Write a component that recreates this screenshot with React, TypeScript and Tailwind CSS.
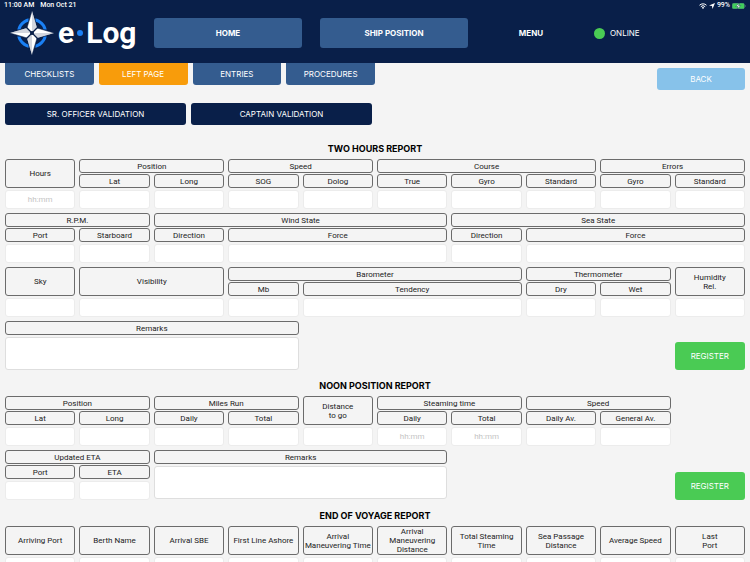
import React, { useId } from 'react';

type Field = { label: string; span?: number; placeholder?: string };
type Block = { label: string; span: number; fields?: Field[]; placeholder?: string };

const SPANS: Record<number, string> = {
  1: 'col-span-1',
  2: 'col-span-2',
  3: 'col-span-3',
  4: 'col-span-4',
};

const twoHours: Block[] = [
  { label: 'Hours', span: 1, placeholder: 'hh:mm' },
  { label: 'Position', span: 2, fields: [{ label: 'Lat' }, { label: 'Long' }] },
  { label: 'Speed', span: 2, fields: [{ label: 'SOG' }, { label: 'Dolog' }] },
  { label: 'Course', span: 3, fields: [{ label: 'True' }, { label: 'Gyro' }, { label: 'Standard' }] },
  { label: 'Errors', span: 2, fields: [{ label: 'Gyro' }, { label: 'Standard' }] },
  { label: 'R.P.M.', span: 2, fields: [{ label: 'Port' }, { label: 'Starboard' }] },
  { label: 'Wind State', span: 4, fields: [{ label: 'Direction' }, { label: 'Force', span: 3 }] },
  { label: 'Sea State', span: 4, fields: [{ label: 'Direction' }, { label: 'Force', span: 3 }] },
  { label: 'Sky', span: 1 },
  { label: 'Visibility', span: 2 },
  { label: 'Barometer', span: 4, fields: [{ label: 'Mb' }, { label: 'Tendency', span: 3 }] },
  { label: 'Thermometer', span: 2, fields: [{ label: 'Dry' }, { label: 'Wet' }] },
  { label: 'Humidity\nRel.', span: 1 },
];

const noonPosition: Block[] = [
  { label: 'Position', span: 2, fields: [{ label: 'Lat' }, { label: 'Long' }] },
  { label: 'Miles Run', span: 2, fields: [{ label: 'Daily' }, { label: 'Total' }] },
  { label: 'Distance\nto go', span: 1 },
  {
    label: 'Steaming time',
    span: 2,
    fields: [
      { label: 'Daily', placeholder: 'hh:mm' },
      { label: 'Total', placeholder: 'hh:mm' },
    ],
  },
  { label: 'Speed', span: 2, fields: [{ label: 'Daily Av.' }, { label: 'General Av.' }] },
];

const updatedEta: Block = { label: 'Updated ETA', span: 2, fields: [{ label: 'Port' }, { label: 'ETA' }] };

const endOfVoyage: Block[] = [
  'Arriving Port',
  'Berth Name',
  'Arrival SBE',
  'First Line Ashore',
  'Arrival\nManeuvering Time',
  'Arrival\nManeuvering\nDistance',
  'Total Steaming\nTime',
  'Sea Passage\nDistance',
  'Average Speed',
  'Last\nPort',
].map(label => ({ label, span: 1 }));

const cell = 'flex items-center justify-center rounded-[3px] border border-[#6b6b6b] text-center whitespace-pre';
const input =
  'w-full rounded-[3px] border border-[#ececec] bg-white text-center placeholder:text-[#c4c4c4] outline-none focus:border-[#345c8f]';

const FieldInput: React.FC<{ field: Field; tall?: boolean }> = ({ field, tall }) => {
  const id = useId();
  return (
    <div className={`${SPANS[field.span ?? 1]} min-w-0`}>
      <label htmlFor={id} className={`${cell} ${tall ? 'h-[29px]' : 'h-[14px]'}`}>{field.label}</label>
      <input id={id} placeholder={field.placeholder} className={`${input} mt-[2px] block h-[19px]`} />
    </div>
  );
};

const FieldBlock: React.FC<{ block: Block }> = ({ block }) => {
  if (!block.fields) {
    return <FieldInput field={block} tall />;
  }
  return (
    <div role="group" aria-label={block.label} className={`${SPANS[block.span]} grid grid-cols-subgrid gap-y-px`}>
      <div className={`${cell} col-span-full h-[14px]`}>{block.label}</div>
      {block.fields.map(field => (
        <FieldInput key={field.label} field={field} />
      ))}
    </div>
  );
};

const Remarks: React.FC = () => {
  const id = useId();
  return (
    <div className="col-span-4">
      <label htmlFor={id} className={`${cell} h-[14px]`}>Remarks</label>
      <textarea id={id} className="mt-[2px] block h-[33px] w-full resize-none rounded-[3px] border border-[#dedede] bg-white p-1 outline-none" />
    </div>
  );
};

const Register: React.FC = () => (
  <button className="col-start-10 h-7 self-end rounded-[3px] bg-[#4acb54] font-['Inter',sans-serif] text-[8px] text-white">
    REGISTER
  </button>
);

const Section: React.FC<{ title: string; children: React.ReactNode }> = ({ title, children }) => (
  <section className="mb-2">
    <h2 className="mb-[2px] text-center font-['Inter',sans-serif] text-[9px] leading-4 font-bold text-black">{title}</h2>
    <div className="grid grid-cols-10 gap-1">{children}</div>
  </section>
);

const Logo: React.FC = () => (
  <div className="flex min-w-0 items-center pl-[10px]">
    <svg viewBox="0 0 44 44" className="size-11 shrink-0" aria-hidden="true">
      <circle cx="22" cy="22" r="13.6" fill="none" stroke="#1a80f5" strokeWidth="3" />
      <path d="M22 2V42M2 22H42" stroke="#091f49" strokeWidth="7" />
      <path d="M22 0 27 17 44 22 27 27 22 44 17 27 0 22 17 17Z" fill="#fff" stroke="#091f49" strokeWidth=".5" />
      <path d="M22 0V22L27 17ZM44 22H22L27 27ZM22 44V22L17 27ZM0 22H22L17 17Z" fill="#d3d6de" />
      <path d="M16.5 16.5 27.5 27.5M27.5 16.5 16.5 27.5" stroke="#091f49" strokeWidth="1.3" />
      <circle cx="22" cy="22" r="2" fill="#091f49" />
    </svg>
    <div className="ml-1 flex items-center font-['Roboto',sans-serif] text-[30px] leading-none font-bold text-white">
      <span>e</span>
      <span className="mx-[3px] size-[6px] rounded-full bg-[#1a80f5]" />
      <span>Log</span>
    </div>
  </div>
);

const StatusBar: React.FC = () => (
  <div className="flex h-[11px] items-center justify-between px-1 font-['Roboto',sans-serif] text-[7px] leading-none font-medium text-white">
    <div className="flex gap-[6px]">
      <span>11:00 AM</span>
      <span>Mon Oct 21</span>
    </div>
    <div className="flex items-center gap-[2px]">
      <svg viewBox="0 0 16 12" className="h-[6px] w-2" aria-hidden="true">
        <path d="M1 4.5a10 10 0 0 1 14 0M3.6 7.4a6.2 6.2 0 0 1 8.8 0" fill="none" stroke="#fff" strokeWidth="2" />
        <path d="M8 12 5.6 9.4a3.4 3.4 0 0 1 4.8 0Z" fill="#fff" />
      </svg>
      <svg viewBox="0 0 12 12" className="size-[6px]" aria-hidden="true">
        <path d="M12 0 7 12 6 6 0 5Z" fill="#fff" />
      </svg>
      <span>99%</span>
      <svg viewBox="0 0 28 12" className="h-[6px] w-[14px]" aria-hidden="true">
        <rect x=".5" y=".5" width="24" height="11" rx="3" fill="#3fcf5c" stroke="#5fae7e" />
        <path d="M26 4v4c1.4-.4 1.4-3.6 0-4Z" fill="#7f8ca6" />
        <path d="M14.5 0 7.5 7H12l-1.5 5 7-7H13Z" fill="#fff" stroke="#091f49" strokeWidth=".8" />
      </svg>
    </div>
  </div>
);

const tabs = ['CHECKLISTS', 'LEFT PAGE', 'ENTRIES', 'PROCEDURES'];

export default function App() {
  return (
    <div className="flex h-screen flex-col bg-[#f4f4f4] font-['Roboto',sans-serif] text-[8px] leading-[9px] text-[#222]">
      <header className="shrink-0 bg-[#091f49] pb-[10px] font-['Inter',sans-serif]">
        <StatusBar />
        <nav className="grid h-[42px] grid-cols-[136fr_148fr_148fr_90fr_156fr] items-center gap-x-[18px] text-[8px] font-bold text-white">
          <Logo />
          <button className="h-[30px] rounded-[3px] bg-[#345c8f]">HOME</button>
          <button className="h-[30px] rounded-[3px] bg-[#345c8f]">SHIP POSITION</button>
          <button className="h-[30px]">MENU</button>
          <div className="flex items-center gap-[5px] font-normal">
            <span className="size-[11px] rounded-full bg-[#4acb54]" />
            <span>ONLINE</span>
          </div>
        </nav>
      </header>

      <main className="min-h-0 flex-1 overflow-y-auto px-[5px] [scrollbar-width:none]">
        <div className="flex items-start justify-between font-['Inter',sans-serif] text-white">
          <div className="grid w-1/2 grid-cols-4 gap-[5px]">
            {tabs.map(tab => (
              <button
                key={tab}
                className={`h-[22px] rounded-b-[3px] ${tab === 'LEFT PAGE' ? 'bg-[#f89c0b]' : 'bg-[#345c8f]'}`}
              >
                {tab}
              </button>
            ))}
          </div>
          <button className="mt-[5px] h-[22px] w-[88px] rounded-[3px] bg-[#87c2ea]">BACK</button>
        </div>

        <div className="mt-[13px] mb-4 grid w-[49.6%] grid-cols-2 gap-[5px] font-['Inter',sans-serif] text-white">
          <button className="h-[22px] rounded-[3px] bg-[#091f49]">SR. OFFICER VALIDATION</button>
          <button className="h-[22px] rounded-[3px] bg-[#091f49]">CAPTAIN VALIDATION</button>
        </div>

        <Section title="TWO HOURS REPORT">
          {twoHours.map(block => (
            <FieldBlock key={block.label} block={block} />
          ))}
          <Remarks />
          <Register />
        </Section>

        <Section title="NOON POSITION REPORT">
          {noonPosition.map(block => (
            <FieldBlock key={block.label} block={block} />
          ))}
          <div className="col-span-1" />
          <FieldBlock block={updatedEta} />
          <Remarks />
          <Register />
        </Section>

        <Section title="END OF VOYAGE REPORT">
          {endOfVoyage.map(block => (
            <FieldBlock key={block.label} block={block} />
          ))}
        </Section>
      </main>
    </div>
  );
}
